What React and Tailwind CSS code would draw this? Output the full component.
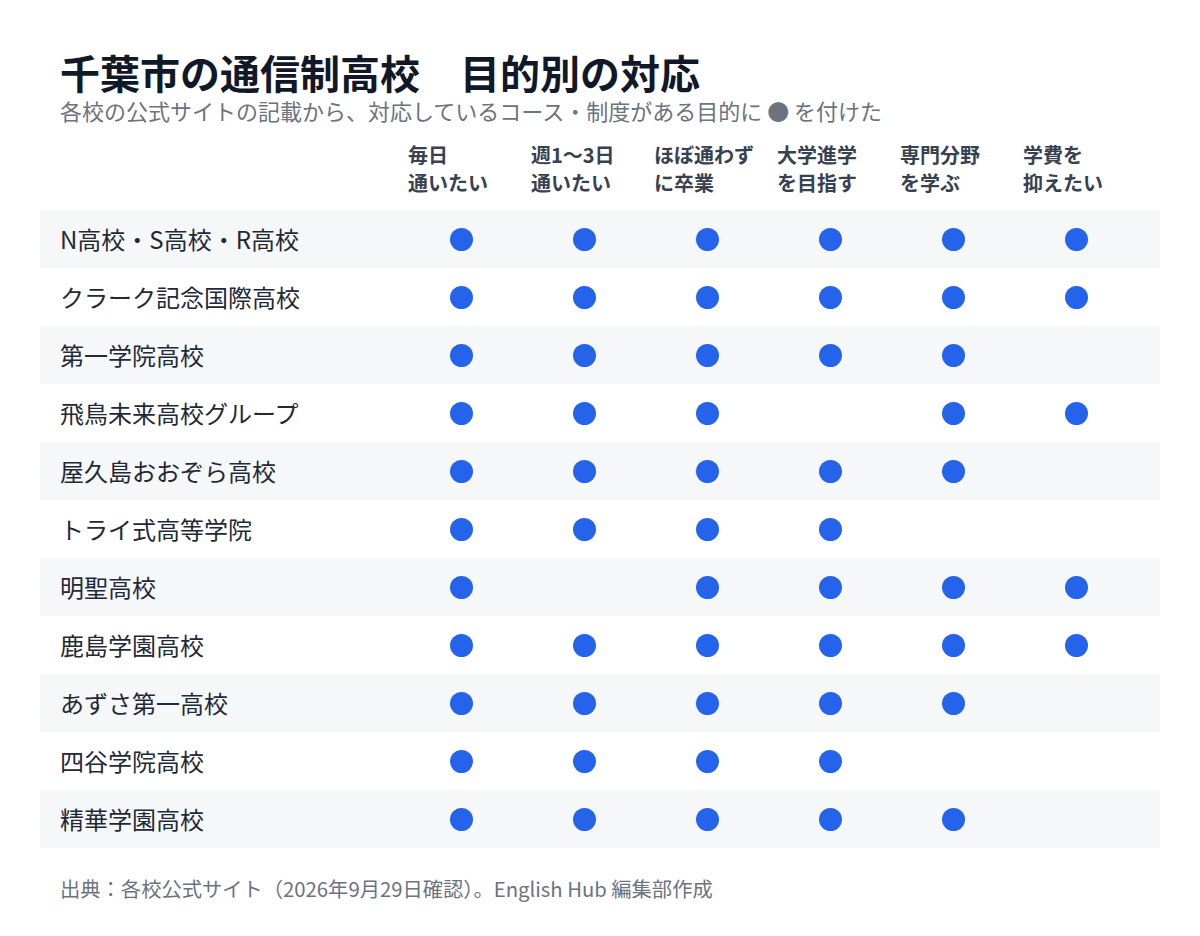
import React from "react";

const COLS = [
    ["毎日", "通いたい"],
    ["週1〜3日", "通いたい"],
    ["ほぼ通わず", "に卒業"],
    ["大学進学", "を目指す"],
    ["専門分野", "を学ぶ"],
    ["学費を", "抑えたい"],
];

const ROWS = [
    ["N高校・S高校・R高校", [1, 1, 1, 1, 1, 1]],
    ["クラーク記念国際高校", [1, 1, 1, 1, 1, 1]],
    ["第一学院高校", [1, 1, 1, 1, 1, 0]],
    ["飛鳥未来高校グループ", [1, 1, 1, 0, 1, 1]],
    ["屋久島おおぞら高校", [1, 1, 1, 1, 1, 0]],
    ["トライ式高等学院", [1, 1, 1, 1, 0, 0]],
    ["明聖高校", [1, 0, 1, 1, 1, 1]],
    ["鹿島学園高校", [1, 1, 1, 1, 1, 1]],
    ["あずさ第一高校", [1, 1, 1, 1, 1, 0]],
    ["四谷学院高校", [1, 1, 1, 1, 0, 0]],
    ["精華学園高校", [1, 1, 1, 1, 1, 0]],
];

export default function App() {
    return (
        <div
            className="w-[1200px] h-[936px] bg-white px-10 pt-[52px]"
            style={{ fontFamily: '"Noto Sans CJK JP", "Noto Sans", sans-serif' }}
        >
            {/* TITLE */}
            <div className="pl-5">
                <h1 className="text-[40px] leading-[40px] font-bold text-[#111827]">
                    千葉市の通信制高校　目的別の対応
                </h1>
                <p className="mt-[6px] text-[22px] leading-[24px] text-[#6b7280]">
                    各校の公式サイトの記載から、対応しているコース・制度がある目的に ● を付けた
                </p>
            </div>

            {/* HEADER */}
            <div className="grid grid-cols-[340px_repeat(6,123px)] pl-5 mt-[19px] pb-[13px]">
                <span></span>
                {COLS.map((c, i) => (
                    <div
                        key={i}
                        className="pl-2 text-[20px] leading-[28px] font-bold text-[#374151]"
                    >
                        <div>{c[0]}</div>
                        <div>{c[1]}</div>
                    </div>
                ))}
            </div>

            {/* ROWS */}
            <div>
                {ROWS.map(([name, marks], r) => (
                    <div
                        key={name}
                        className={
                            "grid grid-cols-[340px_repeat(6,123px)] pl-5 h-[58px] items-center " +
                            (r % 2 === 0 ? "bg-[#f6f7f9]" : "bg-white")
                        }
                    >
                        <span className="text-[24px] text-[#1f2937] whitespace-nowrap">
                            {name}
                        </span>
                        {marks.map((m, i) => (
                            <div key={i} className="flex justify-center">
                                {m ? (
                                    <span className="w-[23px] h-[23px] rounded-full bg-[#2563eb]" />
                                ) : null}
                            </div>
                        ))}
                    </div>
                ))}
            </div>

            {/* FOOTER */}
            <p className="pl-5 mt-[26px] text-[20.3px] leading-[28px] text-[#6b7280]">
                出典：各校公式サイト（2026年9月29日確認）。English Hub 編集部作成
            </p>
        </div>
    );
}
